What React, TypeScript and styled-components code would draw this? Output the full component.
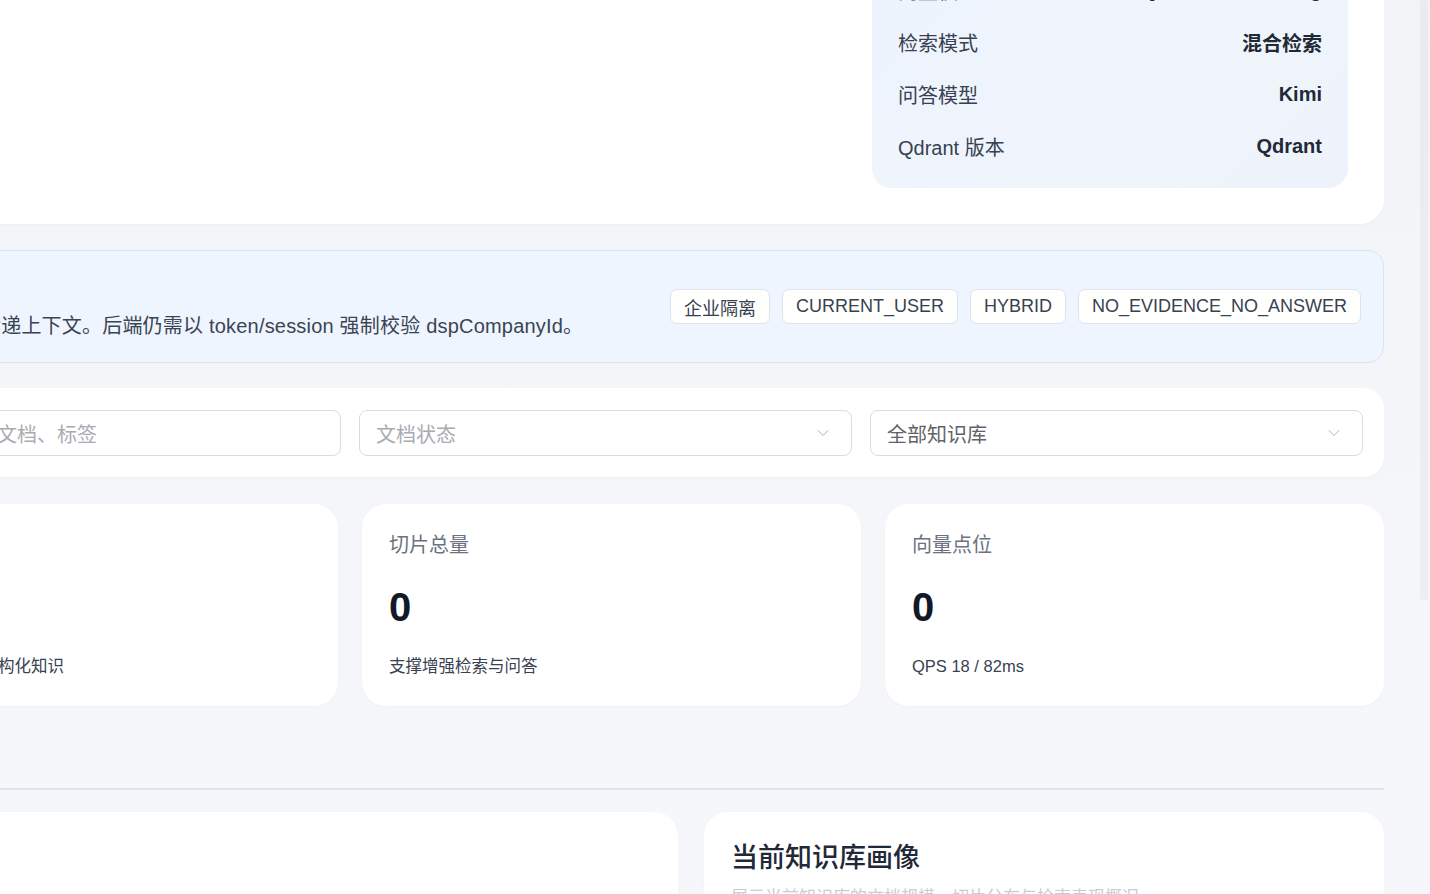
import { createGlobalStyle } from "styled-components";
import styled from "styled-components";
import { ChevronDown } from "lucide-react";

const GlobalStyle = createGlobalStyle`
  html, body {
    margin: 0;
    padding: 0;
    height: 100%;
    overflow: hidden;
    background: #f2f4f8;
  }

  body {
    font-family: "Liberation Sans", "Noto Sans CJK SC", sans-serif;
    color: #1f2937;
  }

  * {
    box-sizing: border-box;
  }
`;

const Page = styled.div`
  display: flex;
  height: 894px;
  overflow: hidden;
  background: linear-gradient(180deg, #f1f3f7 0%, #f4f6fa 60%, #f6f7fb 100%);
`;

const Main = styled.main`
  width: 1384px;
  flex-shrink: 0;
  overflow: hidden;
`;

// the visible area is a crop: the content column starts left of the window and above it
const Column = styled.div`
  width: 1545px;
  margin-left: -161px;
  margin-top: -76px;
  display: flex;
  flex-direction: column;
`;

const ScrollTrack = styled.div`
  flex: 1;
  display: flex;
  justify-content: flex-end;
  padding-right: 2px;
`;

const ScrollThumb = styled.div`
  width: 8px;
  height: 600px;
  border-radius: 4px;
  background: rgba(15, 23, 42, 0.035);
`;

const Card = styled.section`
  background: #ffffff;
  border-radius: 24px;
  box-shadow: 0 1px 3px rgba(15, 23, 42, 0.03);
`;

const HeroCard = styled(Card)`
  display: flex;
  gap: 40px;
  padding: 28px 36px 36px 36px;
  height: 300px;
`;

const HeroText = styled.div`
  flex: 1;
  display: flex;
  flex-direction: column;

  h2 {
    margin: 0;
    font-size: 26px;
    line-height: 28px;
    font-weight: 600;
  }

  p {
    margin: 0;
    font-size: 17px;
    line-height: 24px;
    color: #b4b9c2;
  }
`;

const InfoPanel = styled.div`
  width: 476px;
  border-radius: 20px;
  padding: 12px 26px 16px 26px;
  background: linear-gradient(135deg, #edf3fd 0%, #f0f5fc 60%, #eef3fb 100%);
`;

const InfoRow = styled.div`
  height: 52px;
  display: flex;
  align-items: center;
  justify-content: space-between;
  font-size: 20px;

  span {
    color: #374151;
  }

  strong {
    color: #1f2937;
    font-weight: 700;
  }
`;

const Notice = styled.section`
  margin-top: 26px;
  height: 113px;
  border-radius: 16px;
  border: 1px solid #d6e5f6;
  background: #eef5ff;
  display: flex;
  align-items: center;
  justify-content: space-between;
  padding: 0 22px 0 40px;
`;

const NoticeText = styled.div`
  display: flex;
  flex-direction: column;
  gap: 6px;
  padding-top: 4px;

  h3 {
    margin: 0;
    font-size: 20px;
    line-height: 28px;
    font-weight: 600;
    color: #1f2937;
  }

  p {
    margin: 0;
    font-size: 20px;
    line-height: 28px;
    color: #3b4452;
    letter-spacing: 0.2px;
  }
`;

const TagList = styled.div`
  display: flex;
  gap: 12px;
`;

const Tag = styled.span`
  height: 35px;
  display: inline-flex;
  align-items: center;
  padding: 0 13px;
  border: 1px solid #dde3ea;
  border-radius: 7px;
  background: #fffffd;
  font-size: 18px;
  color: #374151;
`;

const FilterCard = styled(Card)`
  margin-top: 25px;
  border-radius: 20px;
  padding: 22px 21px 21px 21px;
  display: grid;
  grid-template-columns: 481fr 493fr 493fr;
  gap: 18px;
`;

const Field = styled.div<{ $filled?: boolean }>`
  height: 46px;
  border: 1px solid #d9dce3;
  border-radius: 8px;
  display: flex;
  align-items: center;
  justify-content: space-between;
  padding: 0 18px 0 16px;
  font-size: 20px;
  color: ${(p) => (p.$filled ? "#5f6368" : "#a8abb2")};
  background: #fff;

  svg {
    color: #b0b3ba;
  }
`;

const StatsGrid = styled.div`
  margin-top: 27px;
  display: grid;
  grid-template-columns: repeat(3, 1fr);
  gap: 24px;
`;

const StatCard = styled(Card)`
  height: 202px;
  padding: 28px 27px;
  display: flex;
  flex-direction: column;
`;

const StatLabel = styled.div`
  font-size: 20px;
  line-height: 26px;
  color: #6b7280;
`;

const StatValue = styled.div`
  margin-top: 25px;
  font-size: 40px;
  line-height: 48px;
  font-weight: 700;
  color: #111827;
`;

const StatHint = styled.div`
  margin-top: 23px;
  font-size: 16.5px;
  line-height: 24px;
  color: #374151;
`;

const Divider = styled.hr`
  margin: 82px 0 0 0;
  border: none;
  height: 2px;
  border-radius: 1px;
  background: #dfe3ea;
`;

const BottomGrid = styled.div`
  margin-top: 22px;
  display: grid;
  grid-template-columns: 839px 1fr;
  gap: 26px;
`;

const PanelCard = styled(Card)`
  min-height: 200px;
  padding: 29px 27px;

  h3 {
    margin: 0;
    font-size: 27px;
    line-height: 34px;
    font-weight: 500;
    color: #1f2937;
  }

  p {
    margin: 10px 0 0 0;
    font-size: 17px;
    line-height: 26px;
    color: #c8ccd3;
  }
`;

const infoRows = [
  { label: "向量模型", value: "Qwen3-Embedding" },
  { label: "检索模式", value: "混合检索" },
  { label: "问答模型", value: "Kimi" },
  { label: "Qdrant 版本", value: "Qdrant" },
];

const tags = ["企业隔离", "CURRENT_USER", "HYBRID", "NO_EVIDENCE_NO_ANSWER"];

const stats = [
  { label: "文档总数", value: "0", hint: "汇聚企业多源非结构化知识" },
  { label: "切片总量", value: "0", hint: "支撑增强检索与问答" },
  { label: "向量点位", value: "0", hint: "QPS 18 / 82ms" },
];

const App = () => {
  return (
    <>
      <GlobalStyle />
      <Page>
        <Main>
          <Column>
            <HeroCard>
              <HeroText>
                <h2>企业知识库</h2>
                <p>统一管理企业文档、切片与向量索引，保障证据问答</p>
              </HeroText>
              <InfoPanel>
                {infoRows.map((row) => (
                  <InfoRow key={row.label}>
                    <span>{row.label}</span>
                    <strong>{row.value}</strong>
                  </InfoRow>
                ))}
              </InfoPanel>
            </HeroCard>

            <Notice>
              <NoticeText>
                <h3>租户上下文</h3>
                <p>当前页面仅传递上下文。后端仍需以 token/session 强制校验 dspCompanyId。</p>
              </NoticeText>
              <TagList>
                {tags.map((t) => (
                  <Tag key={t}>{t}</Tag>
                ))}
              </TagList>
            </Notice>

            <FilterCard>
              <Field>搜索知识库、文档、标签</Field>
              <Field>
                文档状态
                <ChevronDown size={20} strokeWidth={1.2} />
              </Field>
              <Field $filled>
                全部知识库
                <ChevronDown size={20} strokeWidth={1.2} />
              </Field>
            </FilterCard>

            <StatsGrid>
              {stats.map((s) => (
                <StatCard key={s.label}>
                  <StatLabel>{s.label}</StatLabel>
                  <StatValue>{s.value}</StatValue>
                  <StatHint>{s.hint}</StatHint>
                </StatCard>
              ))}
            </StatsGrid>

            <Divider />

            <BottomGrid>
              <PanelCard>
                <h3>文档列表</h3>
              </PanelCard>
              <PanelCard>
                <h3>当前知识库画像</h3>
                <p>展示当前知识库的文档规模、切片分布与检索表现概况。</p>
              </PanelCard>
            </BottomGrid>
          </Column>
        </Main>
        <ScrollTrack>
          <ScrollThumb />
        </ScrollTrack>
      </Page>
    </>
  );
};

export default App;
